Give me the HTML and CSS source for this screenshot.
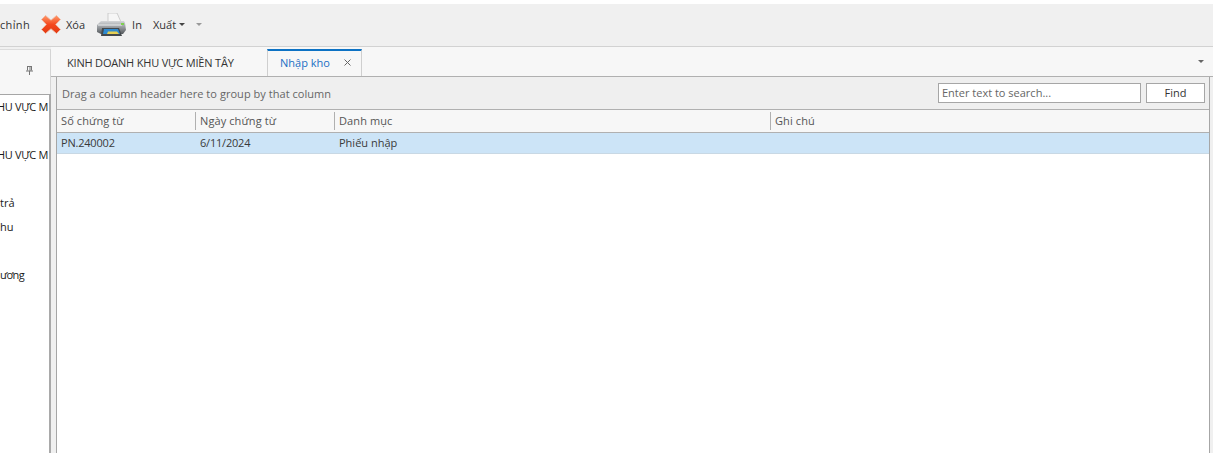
FILE: index.html
```html
<!DOCTYPE html>
<html lang="vi">
<head>
<meta charset="utf-8">
<title>Nhập kho</title>
<link rel="stylesheet" href="styles.css">
</head>
<body>
<div class="app">
  <div class="toolbar">
    <span class="tool-text first">chỉnh</span>
    <svg class="icon-x" width="20" height="19" viewBox="0 0 20 19"><defs><linearGradient id="xg" x1="0" y1="0" x2="0" y2="1"><stop offset="0" stop-color="#ff9a6a"/><stop offset="0.5" stop-color="#f4481e"/><stop offset="1" stop-color="#e23a12"/></linearGradient></defs><path d="M4.500 .5 10 5.200 15.500 .5 19.500 4.500 14.700 9.500 19.500 14.500 15.500 18.500 10 13.800 4.500 18.500 .5 14.500 5.300 9.500 .5 4.500z" fill="url(#xg)" stroke="#eeb9a4" stroke-width="0.8" stroke-linejoin="round"/></svg>
    <span class="tool-text xoa">Xóa</span>
    <svg class="icon-print" width="30" height="23" viewBox="0 0 30 23"><defs><linearGradient id="pg" x1="0" y1="0" x2="0" y2="1"><stop offset="0" stop-color="#d4d6d8"/><stop offset="0.45" stop-color="#9a9ea2"/><stop offset="1" stop-color="#55595d"/></linearGradient></defs><path d="M12 0h9l4 9H12z" fill="#f6f6f6" stroke="#bdbdbd" stroke-width="0.7"/><path d="M1 12 5 8h23l1 2 1 7-3 4H5l-4-2z" fill="url(#pg)"/><path d="M2 12h24" stroke="#eceeef" stroke-width="1"/><path d="M6 15h17l3 8H5z" fill="#44494d"/><path d="M8 16h14l2 5H7z" fill="#2f8ad0"/><path d="M12 18.500h9l2 2.500H11z" fill="#e6cf52"/><rect x="25" y="10" width="3" height="2" fill="#7ed04f"/></svg>
    <span class="tool-text in">In</span>
    <span class="tool-text xuat">Xuất<i class="caret dark"></i></span>
    <i class="caret light"></i>
  </div>
  <div class="workspace">
    <aside class="side">
      <div class="side-head">
        <svg width="7" height="9" viewBox="0 0 7 9"><path d="M1 .5h5M1.500 .5v4M5.500 .5v4M0 5h7M3.500 5v4M4 1v4" stroke="#777" stroke-width="1" fill="none"/></svg>
      </div>
      <ul class="side-list">
        <li class="clip">HU VỰC M</li>
        <li></li>
        <li class="clip">HU VỰC M</li>
        <li></li>
        <li>trả</li>
        <li>hu</li>
        <li></li>
        <li class="tight">ương</li>
      </ul>
    </aside>
    <main class="main">
      <div class="tabs">
        <div class="tab">KINH DOANH KHU VỰC MIỀN TÂY</div>
        <div class="tab active">Nhập kho<svg class="close" width="7" height="7" viewBox="0 0 7 7"><path d="M.5 .5l6 6M6.500 .5l-6 6" stroke="#666" stroke-width="1"/></svg></div>
        <i class="caret tab-menu"></i>
      </div>
      <div class="pane">
        <div class="grid">
          <div class="group-bar">
            <span class="group-text">Drag a column header here to group by that column</span>
            <div class="search">
              <div class="search-box">Enter text to search...</div>
              <div class="find">Find</div>
            </div>
          </div>
          <div class="row head">
            <div class="c c1">Số chứng từ</div>
            <div class="c c2">Ngày chứng từ</div>
            <div class="c c3">Danh mục</div>
            <div class="c c4">Ghi chú</div>
          </div>
          <div class="row data">
            <div class="c c1 num">PN.240002</div>
            <div class="c c2 num">6/11/2024</div>
            <div class="c c3">Phiếu nhập</div>
            <div class="c c4"></div>
          </div>
        </div>
      </div>
    </main>
  </div>
</div>
</body>
</html>
```
FILE: styles.css
```css
* { box-sizing: border-box; }
html, body { margin: 0; height: 100%; overflow: hidden; }
body { background: #fff; font-family: "Open Sans", "Noto Sans", sans-serif; font-size: 11px; color: #333; }
.app { height: 453px; padding-top: 4px; display: flex; flex-direction: column; }

.toolbar { height: 43px; flex: none; padding-bottom: 2px; background: #f0f0f0; border-bottom: 1px solid #d2d2d2; display: flex; align-items: center; }
.tool-text { white-space: nowrap; color: #333; }
.first { width: 41px; letter-spacing: .35px; }
.icon-x { flex: none; }
.xoa { margin-left: 5px; }
.icon-print { flex: none; margin-left: 11px; }
.in { margin-left: 6px; }
.xuat { margin-left: 11px; display: flex; align-items: center; }
.caret { display: block; width: 0; height: 0; border-left: 3px solid transparent; border-right: 3px solid transparent; border-top: 3px solid #444; }
.caret.dark { margin-left: 3px; }
.caret.light { margin-left: 11px; border-top-color: #999; }

.workspace { flex: 1; display: flex; min-height: 0; background: #f0f0f0; }
.side { width: 51px; flex: none; padding-top: 2px; display: flex; flex-direction: column; overflow: hidden; }
.side-head { height: 45px; flex: none; padding: 16px 0 0 26px; background: #f7f7f7; border-top: 1px solid #dcdcdc; border-right: 1px solid #d4d4d4; line-height: 0; }
.side-list { flex: 1; list-style: none; margin: 0; padding: 0; background: #fff; border-top: 1px solid #a6a6a6; border-right: 2px solid #a9a9a9; overflow: hidden; color: #1a1a1a; }
.side-list li { height: 24px; line-height: 24px; white-space: nowrap; }
.side-list .clip { margin-left: -3px; letter-spacing: -.35px; }
.side-list .tight { letter-spacing: -.7px; }

.main { flex: 1; min-width: 0; display: flex; flex-direction: column; }
.tabs { height: 30px; flex: none; background: #f7f7f7; border-bottom: 1px solid #b0b0b0; display: flex; align-items: stretch; padding-left: 1px; position: relative; }
.tab { width: 215px; padding: 1px 0 0 15px; display: flex; align-items: center; white-space: nowrap; color: #333; letter-spacing: -.19px; }
.tab.active { width: 95px; margin-top: 2px; padding: 0 0 3px 12px; letter-spacing: 0; background: #f7f7f7; border-top: 2px solid #0d72c4; border-left: 1px solid #cfcfcf; border-right: 1px solid #cfcfcf; color: #1a6fc4; }
.close { margin-left: 14px; flex: none; }
.tab-menu { position: absolute; right: 9px; top: 13px; border-top-color: #666; }

.pane { flex: 1; min-height: 0; padding: 0 3px 0 5px; }
.grid { height: 100%; background: #fff; border-left: 1px solid #a6a6a6; border-right: 1px solid #a6a6a6; display: flex; flex-direction: column; }
.group-bar { height: 33px; flex: none; background: #efefef; border-bottom: 1px solid #b0b0b0; display: flex; align-items: center; justify-content: space-between; padding: 0 4px 0 5px; }
.group-text { color: #666; padding-top: 1px; letter-spacing: .04px; }
.search { display: flex; gap: 5px; }
.search-box { width: 203px; height: 20px; padding-left: 3px; line-height: 18px; background: #fff; border: 1px solid #a6a6a6; color: #666; }
.find { width: 59px; height: 20px; line-height: 18px; text-align: center; background: #fff; border: 1px solid #a6a6a6; color: #333; }

.row { display: flex; flex: none; }
.c { padding-left: 4px; white-space: nowrap; }
.c1 { width: 138px; }
.c2 { width: 139px; }
.c3 { width: 436px; }
.c4 { flex: 1; }
.head { height: 23px; background: #f7f7f7; border-bottom: 1px solid #b0b0b0; color: #555; padding-top: 2px; letter-spacing: .1px; }
.head .c { line-height: 18px; height: 18px; }
.head .c + .c { border-left: 1px solid #b0b0b0; }
.data { height: 21px; line-height: 20px; background: #cce4f7; border-bottom: 1px solid #c8d8e4; color: #3a3a3a; }
.data .c + .c { border-left: 1px solid transparent; }
.num { letter-spacing: -.2px; }
```
